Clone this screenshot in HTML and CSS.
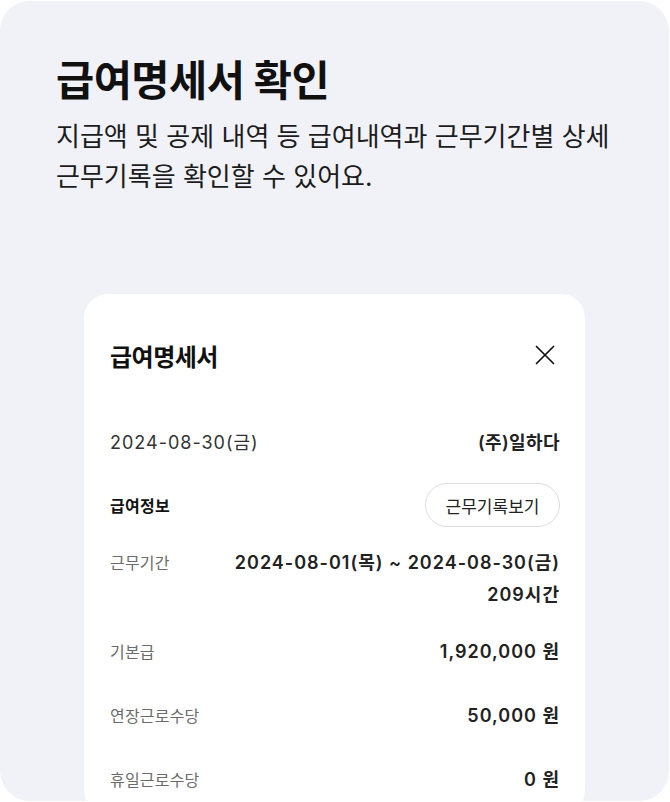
FILE: index.html
```html
<!DOCTYPE html>
<html lang="ko">
<head>
<meta charset="utf-8">
<title>급여명세서 확인</title>
<link rel="stylesheet" href="styles.css">
</head>
<body>
<section class="panel">
  <h1 class="title">급여명세서 확인</h1>
  <p class="desc">지급액 및 공제 내역 등 급여내역과 근무기간별 상세<br>근무기록을 확인할 수 있어요.</p>
  <div class="card">
    <div class="card-head">
      <h2 class="card-title">급여명세서</h2>
      <span class="close" aria-label="닫기">
        <svg width="20" height="20" viewBox="0 0 20 20"><path d="M1.5 1.5 L18.5 18.5 M18.5 1.5 L1.5 18.5" stroke="#111" stroke-width="1.7" stroke-linecap="round" fill="none"/></svg>
      </span>
    </div>
    <div class="meta">
      <span class="meta-date">2024-08-30(금)</span>
      <span class="meta-company">(주)일하다</span>
    </div>
    <div class="section">
      <span class="section-title">급여정보</span>
      <button class="pill">근무기록보기</button>
    </div>
    <div class="rows">
      <div class="row row-period">
        <span class="label">근무기간</span>
        <span class="value">2024-08-01(목) ~ 2024-08-30(금)<br>209시간</span>
      </div>
      <div class="row">
        <span class="label">기본급</span>
        <span class="value">1,920,000 원</span>
      </div>
      <div class="row">
        <span class="label">연장근로수당</span>
        <span class="value">50,000 원</span>
      </div>
      <div class="row">
        <span class="label">휴일근로수당</span>
        <span class="value">0 원</span>
      </div>
    </div>
  </div>
</section>
</body>
</html>
```
FILE: styles.css
```css
html, body {
  margin: 0;
  padding: 0;
  background: #ffffff;
}
body {
  font-family: "Inter", "Noto Sans CJK KR", sans-serif;
  color: #222;
}
.panel {
  box-sizing: border-box;
  width: 669px;
  height: 800px;
  margin-top: 1px;
  background: #f1f2f8;
  border-radius: 30px;
  overflow: hidden;
  padding: 54px 0 0 56px;
}
.title {
  margin: 0;
  font-size: 41.5px;
  line-height: 52px;
  font-weight: 700;
  color: #111;
  letter-spacing: -0.5px;
}
.desc {
  margin: 10px 0 0;
  font-size: 26px;
  line-height: 40px;
  font-weight: 400;
  color: #1c1c1c;
}
.card {
  box-sizing: border-box;
  width: 501px;
  height: 520px;
  margin: 97px 0 0 28px;
  background: #ffffff;
  border-radius: 24px;
  padding: 36px 25px 0 26px;
}
.card-head {
  height: 50px;
  display: flex;
  align-items: center;
  justify-content: space-between;
}
.card-title {
  margin: 0;
  font-size: 24px;
  font-weight: 700;
  color: #111;
  letter-spacing: -0.5px;
}
.close {
  display: flex;
  width: 20px;
  height: 20px;
  margin-right: 5px;
}
.meta {
  margin-top: 46px;
  height: 30px;
  display: flex;
  align-items: center;
  justify-content: space-between;
}
.meta-date {
  font-size: 18px;
  letter-spacing: 1px;
  color: #333;
}
.meta-company {
  font-size: 18px;
  font-weight: 600;
  letter-spacing: 0.4px;
  color: #222;
}
.section {
  margin-top: 27px;
  height: 44px;
  display: flex;
  align-items: center;
  justify-content: space-between;
}
.section-title {
  font-size: 16px;
  font-weight: 700;
  letter-spacing: 0.3px;
  color: #111;
}
.pill {
  height: 44px;
  width: 135px;
  border: 1px solid #dedede;
  border-radius: 22px;
  background: #fff;
  font-family: "Inter", "Noto Sans CJK KR", sans-serif;
  font-size: 17px;
  color: #222;
  padding: 0;
}
.rows {
  margin-top: 20px;
  display: flex;
  flex-direction: column;
  gap: 32px;
}
.row {
  display: flex;
  justify-content: space-between;
  align-items: flex-start;
  line-height: 32px;
}
.row-period {
  margin-bottom: -7px;
}
.label {
  font-size: 16px;
  letter-spacing: 0.2px;
  color: #6b6b6b;
}
.value {
  font-size: 18px;
  font-weight: 600;
  letter-spacing: 1px;
  color: #222;
  text-align: right;
}
```
